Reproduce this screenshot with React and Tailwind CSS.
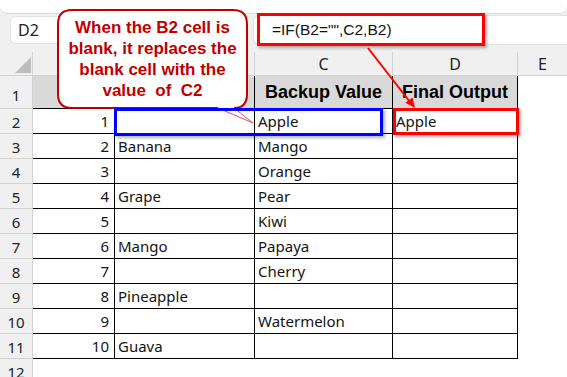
import React from "react";

const rows = [
  [1, "", "Apple", "Apple"],
  [2, "Banana", "Mango", ""],
  [3, "", "Orange", ""],
  [4, "Grape", "Pear", ""],
  [5, "", "Kiwi", ""],
  [6, "Mango", "Papaya", ""],
  [7, "", "Cherry", ""],
  [8, "Pineapple", "", ""],
  [9, "", "Watermelon", ""],
  [10, "Guava", "", ""],
];

function RowHead({ n, tall }) {
  return (
    <div
      className={`w-[33px] shrink-0 bg-[#f0f0f0] border-r border-b border-[#d2d2d2] flex justify-center ${
        tall ? "items-end pb-[2px]" : "items-center pt-[2px]"
      } text-[15px] text-[#222]`}
    >
      {n}
    </div>
  );
}

export default function App() {
  return (
    <div className="relative w-[567px] h-[377px] overflow-hidden bg-white font-['Noto_Sans',sans-serif] text-[#141414]">
      {/* top ribbon bottom + formula bar */}
      <div className="bg-[#f0f0f0]">
        <div className="h-[14px] bg-white rounded-b-[8px] border-b border-[#dadada]"></div>
        <div className="h-[38px] flex items-start pt-[1px]">
          <div className="ml-[10px] mt-[1px] w-[62px] h-[28px] bg-white rounded-[5px] border border-[#e2e2e2] flex items-center pl-[7px] text-[16px] text-[#222]">
            D2
          </div>
          <div className="ml-auto w-[314px] h-[30px] bg-white rounded-l-[6px] border border-r-0 border-[#e2e2e2] flex items-center pl-[18px] text-[15.5px] font-['Liberation_Sans',Arial,sans-serif] text-[#111]">
            =IF(B2="",C2,B2)
          </div>
        </div>
      </div>

      {/* column headers */}
      <div className="flex h-[24px] bg-[#f0f0f0] border-b border-[#d2d2d2] text-[16px] text-[#222]">
        <div className="w-[33px] shrink-0 border-r border-[#d2d2d2] relative">
          <svg className="absolute left-0 top-0" width="33" height="24" viewBox="0 0 33 24">
            <polygon points="31,5 31,21 15,21" fill="#bdbdbd" />
          </svg>
        </div>
        <div className="w-[82px] shrink-0 border-r border-[#d2d2d2]"></div>
        <div className="w-[140px] shrink-0 border-r border-[#d2d2d2]"></div>
        <div className="w-[138px] shrink-0 border-r border-[#d2d2d2] flex items-center justify-center">C</div>
        <div className="w-[125px] shrink-0 border-r border-[#d2d2d2] flex items-center justify-center">D</div>
        <div className="flex-1 flex items-center justify-center">E</div>
      </div>

      {/* row 1 */}
      <div className="flex h-[33px]">
        <RowHead n={1} tall />
        <div className="w-[82px] shrink-0 bg-[#d9d9d9] border-r border-b border-black"></div>
        <div className="w-[140px] shrink-0 bg-[#d9d9d9] border-r border-b border-black"></div>
        <div className="w-[138px] shrink-0 bg-[#d9d9d9] border-r border-b border-black flex items-center justify-center font-['Liberation_Sans',Arial,sans-serif] font-bold text-[18px] text-black">
          Backup Value
        </div>
        <div className="w-[125px] shrink-0 bg-[#d9d9d9] border-r border-b border-black flex items-center justify-center font-['Liberation_Sans',Arial,sans-serif] font-bold text-[18px] text-black">
          Final Output
        </div>
        <div className="flex-1"></div>
      </div>

      {rows.map(([a, b, c, d], i) => (
        <div key={i} className="flex h-[25px] text-[15px]">
          <RowHead n={i + 2} />
          <div className="w-[82px] shrink-0 border-r border-b border-black flex items-center justify-end pr-[5px]">{a}</div>
          <div className="w-[140px] shrink-0 border-r border-b border-black flex items-center pl-[3px]">{b}</div>
          <div className="w-[138px] shrink-0 border-r border-b border-black flex items-center pl-[3px]">{c}</div>
          <div className="w-[125px] shrink-0 border-r border-b border-black flex items-center pl-[3px]">{d}</div>
          <div className="flex-1"></div>
        </div>
      ))}

      <div className="flex h-[25px]">
        <RowHead n={12} />
        <div className="flex-1"></div>
      </div>

      {/* callout bubble */}
      <svg className="absolute left-0 top-0 pointer-events-none" width="567" height="377" viewBox="0 0 567 377">
        <path
          d="M 218 108 H 72 Q 58 108 58 94 V 24 Q 58 10 72 10 H 233 Q 247 10 247 24 V 94 Q 247 108 233 108 L 252 123 Z"
          fill="white"
          stroke="none"
        />
        <path
          d="M 218 108 H 72 Q 58 108 58 94 V 24 Q 58 10 72 10 H 233 Q 247 10 247 24 V 94 Q 247 108 234 108"
          fill="none"
          stroke="#c00000"
          strokeWidth="2"
        />
        <polyline points="234,108 253,123 218,108" fill="none" stroke="#e05050" strokeWidth="1" />
      </svg>
      <div className="absolute left-[58px] top-[10px] w-[189px] h-[98px] flex flex-col items-center justify-center font-['Liberation_Sans',Arial,sans-serif] font-bold text-[17px] leading-[21px] text-[#c00000] whitespace-pre">
        <div>When the B2 cell is</div>
        <div>blank, it replaces the</div>
        <div>blank cell with the</div>
        <div>{"value  of  C2"}</div>
      </div>

      {/* highlight boxes */}
      <div className="absolute left-[257px] top-[13px] w-[228px] h-[33px] border-[3px] border-[#ff0000] shadow-[2px_2px_3px_rgba(0,0,0,0.3)]"></div>
      <div className="absolute left-[114px] top-[108px] w-[269px] h-[28px] border-[3px] border-[#0000ff] shadow-[2px_2px_3px_rgba(0,0,0,0.3)]"></div>
      <div className="absolute left-[393px] top-[108px] w-[126px] h-[27px] border-[3px] border-[#ff0000] shadow-[2px_2px_3px_rgba(0,0,0,0.3)]"></div>

      {/* arrow */}
      <svg className="absolute left-0 top-0 pointer-events-none" width="567" height="377" viewBox="0 0 567 377">
        <line x1="368" y1="48" x2="410" y2="102" stroke="#ff0000" strokeWidth="2" />
        <polygon points="415,108 405.3,102.8 412.5,97.4" fill="#ff0000" />
      </svg>
    </div>
  );
}
